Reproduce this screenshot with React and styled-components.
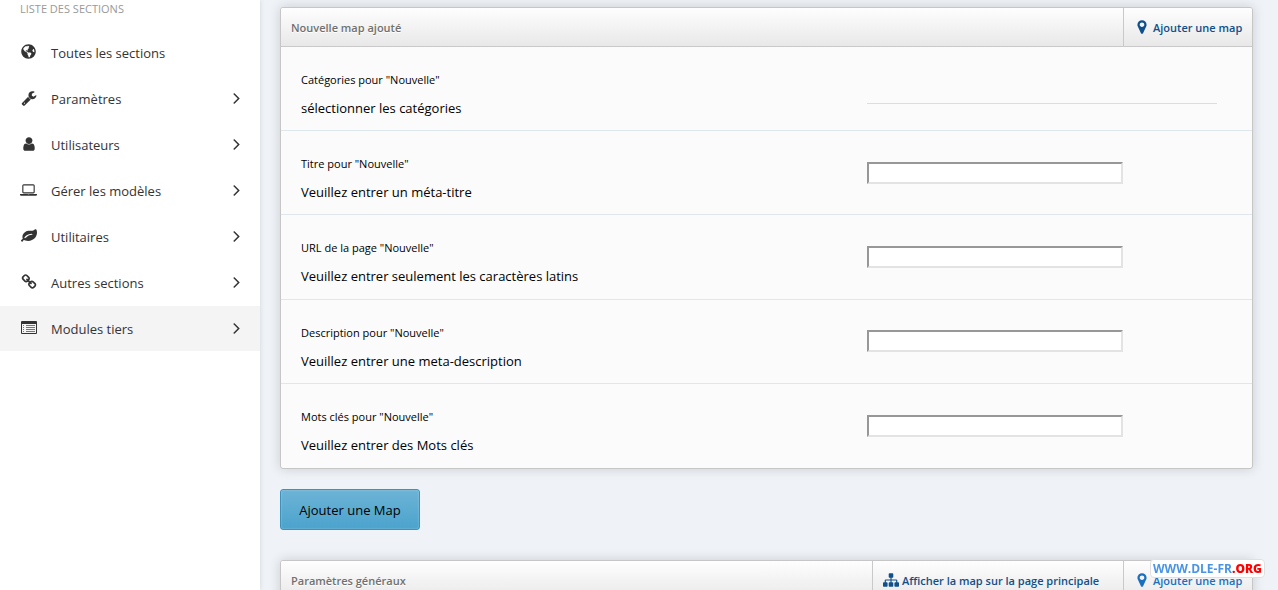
import React from "react";
import styled, { createGlobalStyle } from "styled-components";
import { FaGlobeAmericas } from "react-icons/fa";

const GlobalStyle = createGlobalStyle`
  *, *::before, *::after { box-sizing: border-box; }
  body {
    margin: 0;
    background: #eff3f8;
    color: #000;
    font-family: "Segoe UI", "Open Sans", "Noto Sans", sans-serif;
    font-size: 13px;
  }
`;

const Shell = styled.div`
  display: flex;
  height: 100vh;
  overflow: hidden;
`;

const Sidebar = styled.nav`
  flex: 0 0 260px;
  background: #fff;
  box-shadow: 0 0 5px rgba(0, 0, 0, 0.12);
`;

const SidebarTitle = styled.h2`
  margin: 0;
  padding: 0 20px 12px;
  font-size: 11px;
  line-height: 18px;
  font-weight: 400;
  text-transform: uppercase;
  color: #999;
`;

const SectionList = styled.ul`
  display: flex;
  flex-direction: column;
  gap: 1px;
  margin: 0;
  padding: 0;
  list-style: none;
`;

const SectionLink = styled.a`
  display: flex;
  align-items: center;
  height: 45px;
  padding: 0 20px;
  color: #333;
  text-decoration: none;
  background: ${(p) => (p.$active ? "#f4f4f4" : "transparent")};
`;

const SectionIcon = styled.span`
  display: flex;
  justify-content: center;
  width: 17px;
  margin-right: 14px;
  padding-bottom: 2px;
`;

const SectionName = styled.span`
  flex: 1;
`;

const Main = styled.main`
  flex: 1;
  min-width: 0;
  padding: 7px 25px 0 20px;
`;

const Panel = styled.section`
  border: 1px solid #c6c6c6;
  border-radius: 3px;
  background: #fbfbfb;
  box-shadow: 0 0 12px rgba(0, 0, 0, 0.16);
`;

const PanelHeader = styled.header`
  display: flex;
  height: 39px;
  border-bottom: 1px solid #c9c9c9;
  border-radius: 2px 2px 0 0;
  background: linear-gradient(#fefefe, #e8e8e8);
`;

const PanelTitle = styled.h1`
  flex: 1;
  margin: 0;
  padding-left: 10px;
  font-size: 11px;
  line-height: 40px;
  font-weight: 600;
  color: #707070;
  text-shadow: 0 1px 0 #fff;
`;

const HeaderLink = styled.a`
  display: flex;
  align-items: center;
  gap: 3px;
  width: ${(p) => (p.$wide ? "251px" : "129px")};
  padding-left: 10px;
  border-left: 1px solid #c9c9c9;
  font-size: 11px;
  font-weight: 600;
  white-space: nowrap;
  text-decoration: none;
  color: ${(p) => (p.$bright ? "#1a6fbf" : "#0f4f8a")};
`;

const Fields = styled.form`
  display: grid;
  grid-auto-rows: 1fr;
  min-height: 421px;
`;

const FieldRow = styled.div`
  display: grid;
  grid-template-columns: 1fr 350px;
  align-items: center;
  padding: 0 35px 0 20px;
  border-bottom: 1px solid #dfe6ee;

  &:last-child {
    border-bottom: 0;
  }
`;

const FieldText = styled.div`
  padding-top: 12px;
`;

const FieldLabel = styled.label`
  display: block;
  font-size: 11px;
  font-weight: 500;
  line-height: 27px;
`;

const FieldHint = styled.p`
  margin: 0;
  font-size: 13px;
  line-height: 30px;
`;

const CategoryPicker = styled.div`
  height: 30px;
  border-bottom: 1px solid #ddd;
`;

const TextInput = styled.input`
  width: 256px;
  height: 22px;
  padding: 1px 2px;
  border: 2px solid;
  border-color: #979797 #e3e3e3 #e3e3e3 #979797;
  background: #fff;
`;

const SubmitButton = styled.button`
  display: block;
  min-width: 140px;
  height: 41px;
  margin: 20px 0 30px;
  padding: 0 17px;
  border: 1px solid #3b93bd;
  border-radius: 3px;
  background: linear-gradient(#6db3d6, #4ba3cd);
  box-shadow: inset 0 0 2px rgba(255, 255, 255, 0.4);
  font-family: inherit;
  font-size: 13px;
  color: #000;
`;

const Watermark = styled.div`
  position: fixed;
  right: 13px;
  bottom: 12px;
  padding: 0 2px;
  border: 1px solid #e0e0e0;
  border-radius: 4px;
  background: #fff;
  font-size: 12px;
  line-height: 17px;
  font-weight: 700;
  color: #4a94e6;

  strong {
    color: #f00;
  }
`;

const Glyph = ({ d, box = "0 0 1792 1792", width = 16, height = 16 }) => (
  <svg viewBox={box} width={width} height={height} fill="currentColor" aria-hidden="true">
    <path fillRule="evenodd" d={d} />
  </svg>
);

const ListGlyph = () => (
  <svg viewBox="0 0 16 13" width="16" height="13" fill="currentColor" aria-hidden="true">
    <path
      fillRule="evenodd"
      d="M1 0h14a1 1 0 0 1 1 1v11a1 1 0 0 1-1 1h-14a1 1 0 0 1-1-1v-11a1 1 0 0 1 1-1zM1 3v9h14v-9z"
    />
    <path opacity="0.65" d="M2 4h1v1h-1zM5 4h9v1h-9zM2 6h1v1h-1zM5 6h9v1h-9zM2 8h1v1h-1zM5 8h9v1h-9zM2 10h1v1h-1zM5 10h9v1h-9z" />
  </svg>
);

const paths = {
  marker:
    "M1152 640q0-106-75-181t-181-75-181 75-75 181 75 181 181 75 181-75 75-181zm256 0q0 109-33 179l-364 774q-16 33-47.5 52t-67.5 19-67.5-19-46.5-52l-365-774q-33-70-33-179 0-212 150-362t362-150 362 150 150 362z",
  user:
    "M1536 1399q0 109-62.5 187t-150.5 78h-854q-88 0-150.5-78t-62.5-187q0-85 8.5-160.5t31.5-152 58.5-131 94-89 134.5-34.5q131 128 313 128t313-128q76 0 134.5 34.5t94 89 58.5 131 31.5 152 8.5 160.5zM1280 512q0 159-112.5 271.5t-271.5 112.5-271.5-112.5-112.5-271.5 112.5-271.5 271.5-112.5 271.5 112.5 112.5 271.5z",
  sitemap:
    "M1792 1248v320q0 40-28 68t-68 28h-320q-40 0-68-28t-28-68v-320q0-40 28-68t68-28h96v-192h-512v192h96q40 0 68 28t28 68v320q0 40-28 68t-68 28h-320q-40 0-68-28t-28-68v-320q0-40 28-68t68-28h96v-192h-512v192h96q40 0 68 28t28 68v320q0 40-28 68t-68 28h-320q-40 0-68-28t-28-68v-320q0-40 28-68t68-28h96v-192q0-52 38-90t90-38h512v-192h-96q-40 0-68-28t-28-68v-320q0-40 28-68t68-28h320q40 0 68 28t28 68v320q0 40-28 68t-68 28h-96v192h512q52 0 90 38t38 90v192h96q40 0 68 28t28 68z",
  laptop:
    "M416 1152q-66 0-113-47t-47-113v-704q0-66 47-113t113-47h1088q66 0 113 47t47 113v704q0 66-47 113t-113 47h-1088zm-32-864v704q0 13 9.5 22.5t22.5 9.5h1088q13 0 22.5-9.5t9.5-22.5v-704q0-13-9.5-22.5t-22.5-9.5h-1088q-13 0-22.5 9.5t-9.5 22.5zm1376 928h160v96q0 40-47 68t-113 28h-1600q-66 0-113-28t-47-68v-96h1760zm-720 96q16 0 16-16t-16-16h-160q-16 0-16 16t16 16h160z",
  wrench:
    "M448 1472q0-26-19-45t-45-19-45 19-19 45 19 45 45 19 45-19 19-45zm644-420l-682 682q-37 37-90 37-52 0-91-37l-106-108q-38-36-38-90 0-53 38-91l681-681q39 98 114.5 173.5t173.5 114.5zm634-435q0 39-23 106-47 134-164.5 217.5t-258.5 83.5q-185 0-316.5-131.5t-131.5-316.5 131.5-316.5 316.5-131.5q58 0 121.5 16.5t107.5 46.5q16 11 16 28t-16 28l-293 169v224l193 107q5-3 79-48.5t135.5-81 70.5-35.5q15 0 23.5 10t8.5 25z",
  leaf:
    "M1280 704q0-26-19-45t-45-19q-172 0-318 49.5t-259.5 134-235.5 219.5q-19 21-19 45 0 26 19 45t45 19q24 0 45-19 27-24 74-71t67-66q137-124 268.5-176t313.5-52q26 0 45-19t19-45zm512-198q0 95-20 193-46 224-184.5 383t-357.5 268q-214 108-438 108-148 0-286-47-15-5-88-42t-96-37q-16 0-39.5 32t-45 70-52.5 70-60 32q-43 0-63.5-17.5t-45.5-59.5q-2-4-6-11t-5.5-10-3-9.5-1.5-13.5q0-35 31-73.5t68-65.5 68-56 31-48q0-4-14-38t-16-44q-9-51-9-104 0-115 43.5-220t119-184.5 170.5-139 204-95.5q55-18 145-25.5t179.5-9 178.5-6 163.5-24 113.5-56.5l29.5-29.5 29.5-28 27-20 36.5-16 43.5-4.5q39 0 70.5 46t47.5 112 24 124 8 96z",
  chain:
    "M1520 1216q0-40-28-68l-208-208q-28-28-68-28-42 0-72 32 3 3 19 18.5t21.5 21.5 15 19 13 25.5 3.5 27.5q0 40-28 68t-68 28q-15 0-27.5-3.5t-25.5-13-19-15-21.5-21.5-18.5-19q-33 31-33 73 0 40 28 68l206 207q27 27 68 27 40 0 68-26l147-146q28-28 28-67zm-703-705q0-40-28-68l-206-207q-28-28-68-28-39 0-68 27l-147 146q-28 28-28 67 0 40 28 68l208 208q27 27 68 27 42 0 72-31-3-3-19-18.5t-21.5-21.5-15-19-13-25.5-3.5-27.5q0-40 28-68t68-28q15 0 27.5 3.5t25.5 13 19 15 21.5 21.5 18.5 19q33-31 33-73zm895 705q0 120-85 203l-147 146q-83 83-203 83-121 0-204-85l-206-207q-83-83-83-203 0-123 88-209l-88-88q-86 88-208 88-120 0-204-84l-208-208q-84-84-84-204t85-203l147-146q83-83 203-83 121 0 204 85l206 207q83 83 83 203 0 123-88 209l88 88q86-88 208-88 120 0 204 84l208 208q84 84 84 204z",
  angle:
    "M1171 960q0 13-10 23l-466 466q-10 10-23 10t-23-10l-50-50q-10-10-10-23t10-23l393-393-393-393q-10-10-10-23t10-23l50-50q10-10 23-10t23 10l466 466q10 10 10 23z",
};

const sections = [
  { name: "Toutes les sections", icon: <FaGlobeAmericas size={15} />, leaf: true },
  { name: "Paramètres", icon: <Glyph d={paths.wrench} /> },
  { name: "Utilisateurs", icon: <Glyph d={paths.user} /> },
  { name: "Gérer les modèles", icon: <Glyph d={paths.laptop} box="0 0 1920 1536" width={17} height={14} /> },
  { name: "Utilitaires", icon: <Glyph d={paths.leaf} /> },
  { name: "Autres sections", icon: <Glyph d={paths.chain} /> },
  { name: "Modules tiers", icon: <ListGlyph />, active: true },
];

const fields = [
  { id: "titre", label: 'Titre pour "Nouvelle"', hint: "Veuillez entrer un méta-titre" },
  { id: "url", label: 'URL de la page "Nouvelle"', hint: "Veuillez entrer seulement les caractères latins" },
  { id: "description", label: 'Description pour "Nouvelle"', hint: "Veuillez entrer une meta-description" },
  { id: "mots", label: 'Mots clés pour "Nouvelle"', hint: "Veuillez entrer des Mots clés" },
];

export default function App() {
  return (
    <>
      <GlobalStyle />
      <Shell>
        <Sidebar>
          <SidebarTitle>Liste des sections</SidebarTitle>
          <SectionList>
            {sections.map((s) => (
              <li key={s.name}>
                <SectionLink href="#" $active={s.active}>
                  <SectionIcon>{s.icon}</SectionIcon>
                  <SectionName>{s.name}</SectionName>
                  {!s.leaf && <Glyph d={paths.angle} box="576 448 608 1024" width={7} height={11} />}
                </SectionLink>
              </li>
            ))}
          </SectionList>
        </Sidebar>
        <Main>
          <Panel>
            <PanelHeader>
              <PanelTitle>Nouvelle map ajouté</PanelTitle>
              <HeaderLink href="#">
                <Glyph d={paths.marker} /> Ajouter une map
              </HeaderLink>
            </PanelHeader>
            <Fields id="map-form">
              <FieldRow>
                <FieldText>
                  <FieldLabel as="div" id="categories">Catégories pour "Nouvelle"</FieldLabel>
                  <FieldHint>sélectionner les catégories</FieldHint>
                </FieldText>
                <CategoryPicker role="listbox" aria-labelledby="categories" tabIndex={0} />
              </FieldRow>
              {fields.map((f) => (
                <FieldRow key={f.id}>
                  <FieldText>
                    <FieldLabel htmlFor={f.id}>{f.label}</FieldLabel>
                    <FieldHint>{f.hint}</FieldHint>
                  </FieldText>
                  <TextInput id={f.id} type="text" />
                </FieldRow>
              ))}
            </Fields>
          </Panel>
          <SubmitButton type="submit" form="map-form">Ajouter une Map</SubmitButton>
          <Panel>
            <PanelHeader>
              <PanelTitle as="h2">Paramètres généraux</PanelTitle>
              <HeaderLink href="#" $wide>
                <Glyph d={paths.sitemap} /> Afficher la map sur la page principale
              </HeaderLink>
              <HeaderLink href="#" $bright>
                <Glyph d={paths.marker} /> Ajouter une map
              </HeaderLink>
            </PanelHeader>
          </Panel>
        </Main>
      </Shell>
      <Watermark>
        WWW.DLE-FR<strong>.ORG</strong>
      </Watermark>
    </>
  );
}
